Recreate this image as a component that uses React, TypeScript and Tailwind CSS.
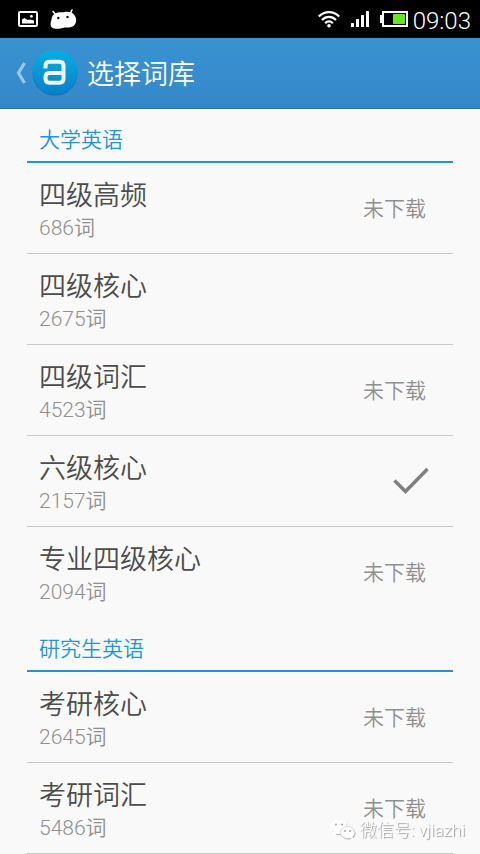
type Book = { name: string; words: number; status: 'missing' | 'ready' | 'selected' };
type Section = { title: string; books: Book[] };

const sections: Section[] = [
  {
    title: '大学英语',
    books: [
      { name: '四级高频', words: 686, status: 'missing' },
      { name: '四级核心', words: 2675, status: 'ready' },
      { name: '四级词汇', words: 4523, status: 'missing' },
      { name: '六级核心', words: 2157, status: 'selected' },
      { name: '专业四级核心', words: 2094, status: 'missing' },
    ],
  },
  {
    title: '研究生英语',
    books: [
      { name: '考研核心', words: 2645, status: 'missing' },
      { name: '考研词汇', words: 5486, status: 'missing' },
    ],
  },
];

function StatusBar() {
  return (
    <div className="flex h-[38px] items-center justify-between bg-black pl-[18px] pr-[9px] text-white">
      <div className="flex items-center gap-3">
        <svg width="20" height="16" viewBox="0 0 20 16" fill="none">
          <rect x="1" y="1" width="18" height="14" rx="1" stroke="white" strokeWidth="2" />
          <path d="M4 12.500V8.500L6.500 7 9.500 9 12 8.500 16 9.500V12.500Z" fill="white" />
          <circle cx="13.400" cy="5.300" r="1.400" fill="white" />
        </svg>
        <svg width="27" height="20" viewBox="0 0 27 20">
          <path d="M3 2.500 6 6M22 1 20 5" stroke="white" strokeWidth="1.600" strokeLinecap="round" />
          <path
            d="M3.800 5.500C7.500 2.500 11 3.600 14 3.200 18 2 22.500 3 24.300 6 27.500 10 26.500 16 22 17.800 19 18.800 16.500 18.600 14.500 18.500 12 19 11 19.800 7 19.800 2 19.800 .3 17.500 .6 14.500 .8 12 1.500 11 1.700 9.500 2 7.500 2.600 6.500 3.800 5.500Z"
            fill="white"
          />
          <circle cx="8.300" cy="9" r="1.200" fill="black" />
          <circle cx="17.500" cy="8" r="1.200" fill="black" />
        </svg>
      </div>
      <div className="flex items-center">
        <svg width="22" height="17" viewBox="0 0 22 17" fill="none" stroke="white" strokeWidth="2.200">
          <path d="M.8 5.600C6.500-.4 15.500-.4 21.200 5.600" />
          <path d="M4 9C8 4.800 14 4.800 18 9" />
          <path d="M7.200 12.200C9.400 9.800 12.600 9.800 14.800 12.200" />
          <circle cx="11" cy="14.800" r="1.800" fill="white" stroke="none" />
        </svg>
        <svg className="ml-[11px]" width="18" height="16" viewBox="0 0 18 16" fill="white">
          <rect x="0" y="12" width="3" height="4" rx=".5" />
          <rect x="5" y="8" width="3" height="8" rx=".5" />
          <rect x="10" y="4" width="3" height="12" rx=".5" />
          <rect x="15" y="0" width="3" height="16" rx=".5" />
        </svg>
        <svg className="ml-[11px]" width="28" height="16" viewBox="0 0 28 16">
          <rect x="0" y="4" width="3" height="8" fill="white" />
          <rect x="3" y="1" width="24" height="14" fill="none" stroke="white" strokeWidth="2" />
          <rect x="13" y="3" width="12" height="10" rx="1" fill="#67e619" />
        </svg>
        <span className="ml-[5px] pt-1 font-['Roboto',sans-serif] text-2xl leading-7 font-light">09:03</span>
      </div>
    </div>
  );
}

function Logo() {
  return (
    <svg width="46" height="48" viewBox="0 0 46 48">
      <defs>
        <linearGradient id="disc" x1="0" y1="0" x2="0" y2="1">
          <stop offset="0" stopColor="#05afe3" />
          <stop offset="1" stopColor="#0680cb" />
        </linearGradient>
      </defs>
      <circle cx="23" cy="24.200" r="22.400" fill="#175f91" opacity=".8" />
      <circle cx="23" cy="23.300" r="22.400" fill="url(#disc)" />
      <path
        d="M13.500 19.500V17Q13.500 12.700 17.500 12.700H27.500Q31.500 12.700 31.500 17V29.500Q31.500 33.700 27.500 33.700H17.500Q13.500 33.700 13.500 29.500V28Q13.500 24 17.500 24H31"
        fill="none"
        stroke="#f0f3f5"
        strokeWidth="4"
      />
    </svg>
  );
}

function BookRow({ book, last }: { book: Book; last: boolean }) {
  return (
    <li className={`border-b ${last ? 'border-transparent' : 'border-[#cacaca]'}`}>
      <button type="button" className="flex w-full items-center justify-between pl-3 text-left">
        <span className="flex flex-col pt-[15px] pb-[10px]">
          <span className="text-[27px] leading-9 font-[350] text-[#4c4c4c]">{book.name}</span>
          <span className="text-[21px] leading-[29px] font-[350] text-[#8f8f8f]">{book.words}词</span>
        </span>
        {book.status === 'missing' && (
          <span className="pt-[2px] pr-[27px] text-[21px] leading-[30px] font-[350] text-[#8f8f8f]">未下载</span>
        )}
        {book.status === 'selected' && (
          <svg className="mr-6" width="36" height="28" viewBox="0 0 36 28" fill="none" aria-label="已选择">
            <path d="M1.500 13.500 12.500 24.500 34.500 2" stroke="#808080" strokeWidth="3.500" />
          </svg>
        )}
      </button>
    </li>
  );
}

function Watermark() {
  return (
    <div className="pointer-events-none fixed right-[15px] bottom-3 flex items-center gap-1">
      <svg width="26" height="22" viewBox="0 0 26 22">
        <g fill="#b0b0b0" transform="translate(.8 1.100)">
          <ellipse cx="9" cy="8" rx="8.400" ry="7.200" />
          <ellipse cx="17.500" cy="13.500" rx="7.200" ry="6" />
        </g>
        <path d="M3 12 2.500 17 7 14Z" fill="white" />
        <ellipse cx="9" cy="8" rx="8.400" ry="7.200" fill="white" />
        <ellipse cx="17.500" cy="13.500" rx="7.200" ry="6" fill="white" stroke="#c4c4c4" strokeWidth=".7" />
        <path d="M19 18.500 23 20.500 22.500 17Z" fill="white" />
        <g fill="#a9a9a9">
          <circle cx="6" cy="5.500" r="1.100" />
          <circle cx="12" cy="5.500" r="1.100" />
          <circle cx="15" cy="12" r="1" />
          <circle cx="20" cy="12" r="1" />
        </g>
      </svg>
      <span className="text-[17px] leading-6 font-light text-white [text-shadow:1px_1px_1px_#8f8f8f]">
        微信号: vjiazhi
      </span>
    </div>
  );
}

export default function App() {
  return (
    <div className="min-h-screen bg-[#f9f9f9] font-['Roboto','Noto_Sans_CJK_SC',sans-serif]">
      <StatusBar />
      <header className="flex h-[71px] items-center border-b border-[#2b74ae] bg-linear-to-b from-[#3a92d1] to-[#3488c9] pl-4">
        <button type="button" aria-label="返回" className="flex items-center gap-[6px]">
          <svg width="10" height="22" viewBox="0 0 10 22" fill="none">
            <path d="M8.500 1 2.500 11 8.500 21" stroke="#9cc8e8" strokeWidth="3.200" />
          </svg>
          <Logo />
        </button>
        <h1 className="ml-[9px] pt-1 text-[27px] leading-9 font-[350] text-white">选择词库</h1>
      </header>
      <main className="px-[27px]">
        {sections.map((section) => (
          <section key={section.title}>
            <h2 className="border-b-2 border-[#1d94da] pt-4 pb-[6px] pl-3 text-[21px] leading-[30px] font-[350] text-[#1d94e0]">
              {section.title}
            </h2>
            <ul>
              {section.books.map((book, i) => (
                <BookRow
                  key={book.name}
                  book={book}
                  last={section.title === '大学英语' && i === section.books.length - 1}
                />
              ))}
            </ul>
          </section>
        ))}
      </main>
      <Watermark />
    </div>
  );
}
